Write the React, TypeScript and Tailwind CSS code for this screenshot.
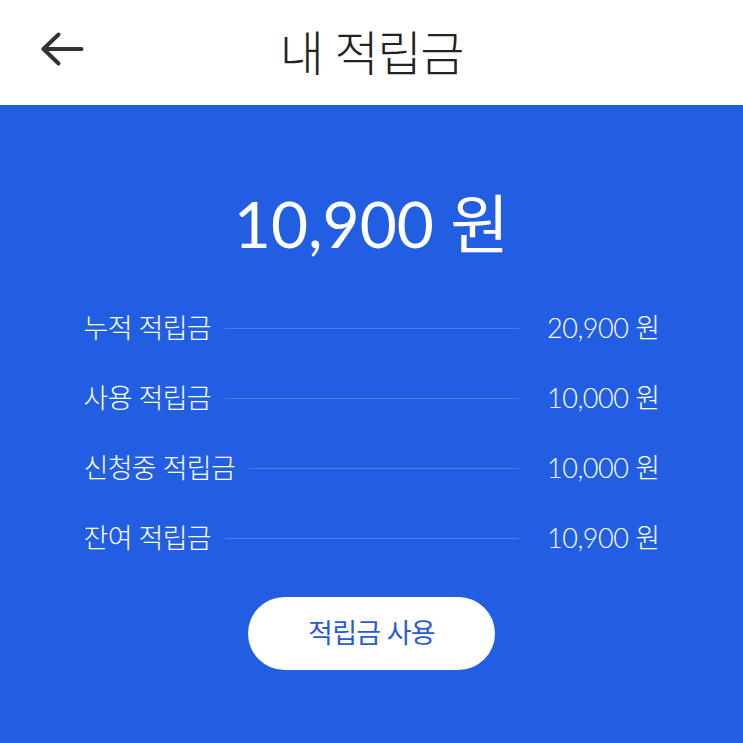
const rows = [
    { label: "누적 적립금", amount: "20,900 원" },
    { label: "사용 적립금", amount: "10,000 원" },
    { label: "신청중 적립금", amount: "10,000 원" },
    { label: "잔여 적립금", amount: "10,900 원" },
];

export default function App() {
    return (
        <div className="w-[743px] h-[743px] flex flex-col bg-[#225ee1] font-['Lato','Noto_Sans_CJK_KR',sans-serif]">
            <header className="h-[105px] bg-white flex items-center relative shrink-0">
                <svg
                    className="absolute left-[40px] top-[31px]"
                    width="44"
                    height="36"
                    viewBox="0 0 44 36"
                    fill="none"
                    stroke="#333"
                    strokeWidth="4"
                    strokeLinecap="round"
                    strokeLinejoin="round"
                >
                    <path d="M3.5 18H41.5" />
                    <path d="M18.5 3.5L3.5 18L18.5 32.5" />
                </svg>
                <h1 className="w-full text-center text-[48px] font-light text-[#222] tracking-tight">내 적립금</h1>
            </header>
            <main className="flex-1 flex flex-col items-center text-white">
                <div className="mt-[87px] text-[64px] leading-none font-normal">10,900 원</div>
                <div className="mt-[59px] w-[576px] flex flex-col gap-[44px]">
                    {rows.map((row) => (
                        <div key={row.label} className="h-[26px] flex items-center text-[27px] font-light">
                            <span className="whitespace-nowrap tracking-tight">{row.label}</span>
                            <div className="flex-1 h-px bg-[#4a7fea] ml-[14px] mr-[28px]" />
                            <span className="whitespace-nowrap tracking-[-0.5px]">{row.amount}</span>
                        </div>
                    ))}
                </div>
                <button className="mt-[46px] w-[247px] h-[73px] rounded-full bg-white text-[#2a5bd4] text-[27px] font-normal tracking-tight">
                    적립금 사용
                </button>
            </main>
        </div>
    );
}
